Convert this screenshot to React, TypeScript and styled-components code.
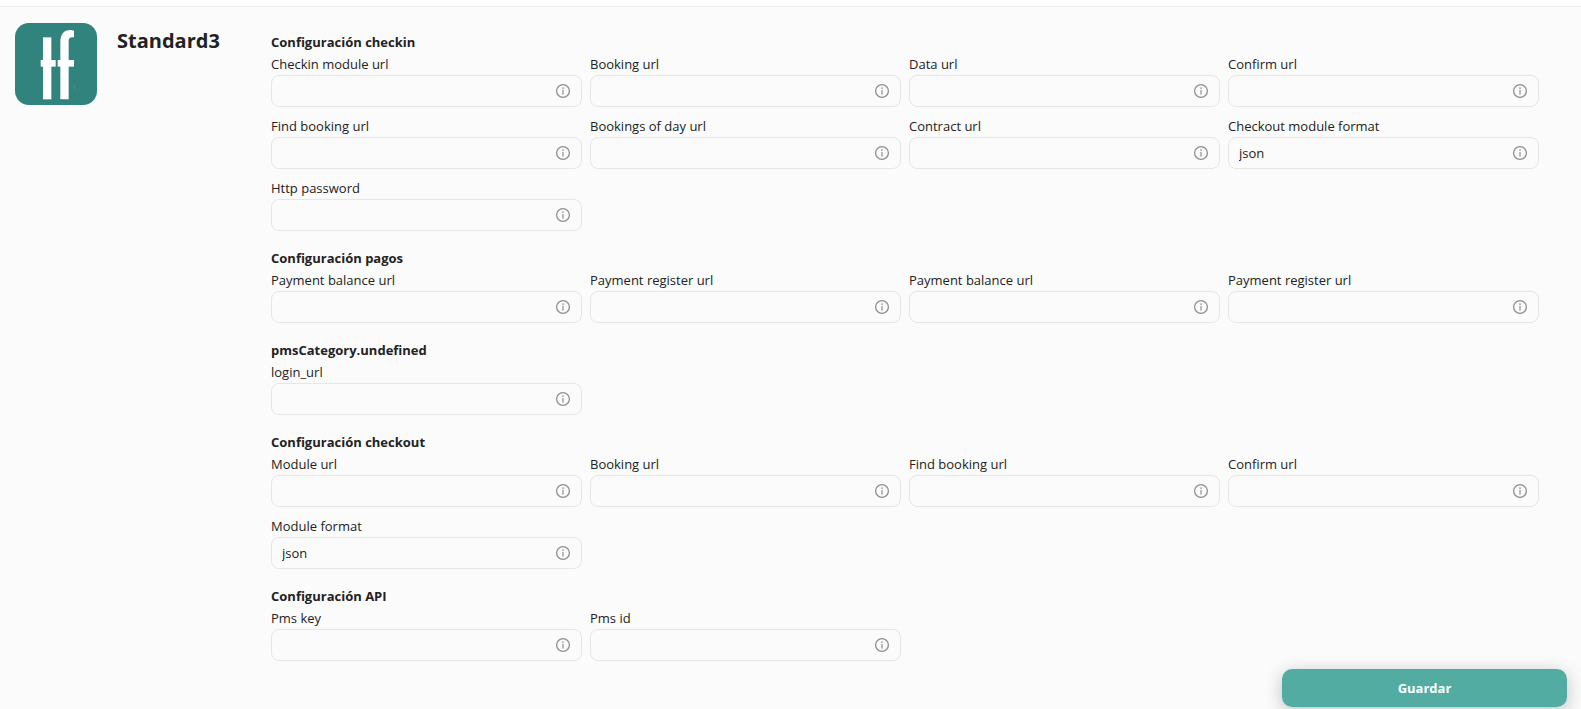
import React, { useId } from "react";
import styled, { createGlobalStyle } from "styled-components";

const GlobalStyle = createGlobalStyle`
  *, *::before, *::after { box-sizing: border-box; }
  body {
    margin: 0;
    background: #fbfbfb;
    color: #222;
    font-family: "Segoe UI", "Open Sans", "Noto Sans", sans-serif;
    font-size: 13px;
    line-height: 22px;
  }
`;

const TopStrip = styled.header`
  height: 7px;
  background: #fff;
  border-bottom: 1px solid #ededed;
`;

const Page = styled.main`
  display: flex;
  flex-direction: column;
  gap: 8px;
  padding: 16px 14px 2px 15px;
`;

const Content = styled.div`
  display: flex;
  align-items: flex-start;
`;

const Brand = styled.div`
  flex: 0 0 256px;
  display: flex;
  align-items: flex-start;
  gap: 20px;
`;

const Logo = styled.svg`
  flex: none;
  width: 82px;
  height: 82px;
  border-radius: 14px;
  background: #30847d;
`;

const Title = styled.h1`
  margin: 2px 0 0;
  font-size: 20px;
  line-height: 32px;
  font-weight: 700;
`;

const Form = styled.form`
  flex: 1;
  min-width: 0;
  display: flex;
  flex-direction: column;
  gap: 16px;
  padding: 8px 28px 0 0;
`;

const Section = styled.section``;

const SectionTitle = styled.h2`
  margin: 0;
  font-size: 13px;
  line-height: 22px;
  font-weight: 700;
`;

const FieldGrid = styled.div`
  display: grid;
  grid-template-columns: repeat(4, minmax(0, 1fr));
  gap: 8px;
`;

const FieldCell = styled.div`
  display: flex;
  flex-direction: column;
`;

const InputBox = styled.div`
  display: flex;
  align-items: center;
  gap: 4px;
  height: 32px;
  padding: 0 10px;
  border: 1px solid #e6e6e6;
  border-radius: 8px;
  color: #8f8f8f;

  &:focus-within { border-color: #53aca2; }
`;

const Input = styled.input`
  flex: 1;
  min-width: 0;
  padding: 0;
  border: 0;
  outline: 0;
  background: transparent;
  color: #222;
  font: inherit;
`;

const InfoSvg = styled.svg`
  flex: none;
  width: 16px;
  height: 16px;
`;

const SaveButton = styled.button`
  align-self: flex-end;
  width: 285px;
  height: 38px;
  border: 0;
  border-radius: 10px;
  background: #53aca2;
  box-shadow: 0 4px 18px rgba(0, 0, 0, 0.24);
  color: #fff;
  font: inherit;
  font-weight: 700;
  cursor: pointer;
`;

type FieldData = { label: string; value?: string };

const sections: { title: string; fields: FieldData[] }[] = [
  {
    title: "Configuración checkin",
    fields: [
      { label: "Checkin module url" },
      { label: "Booking url" },
      { label: "Data url" },
      { label: "Confirm url" },
      { label: "Find booking url" },
      { label: "Bookings of day url" },
      { label: "Contract url" },
      { label: "Checkout module format", value: "json" },
      { label: "Http password" },
    ],
  },
  {
    title: "Configuración pagos",
    fields: [
      { label: "Payment balance url" },
      { label: "Payment register url" },
      { label: "Payment balance url" },
      { label: "Payment register url" },
    ],
  },
  { title: "pmsCategory.undefined", fields: [{ label: "login_url" }] },
  {
    title: "Configuración checkout",
    fields: [
      { label: "Module url" },
      { label: "Booking url" },
      { label: "Find booking url" },
      { label: "Confirm url" },
      { label: "Module format", value: "json" },
    ],
  },
  {
    title: "Configuración API",
    fields: [{ label: "Pms key" }, { label: "Pms id" }],
  },
];

function InfoIcon() {
  return (
    <InfoSvg viewBox="0 0 16 16" aria-hidden>
      <circle cx="8" cy="8" r="6.4" fill="none" stroke="currentColor" strokeWidth="1.3" />
      <rect x="7.3" y="4.4" width="1.4" height="1.5" fill="currentColor" />
      <rect x="7.4" y="7" width="1.2" height="4.6" fill="currentColor" />
    </InfoSvg>
  );
}

function Field({ label, value = "" }: FieldData) {
  const id = useId();
  return (
    <FieldCell>
      <label htmlFor={id}>{label}</label>
      <InputBox>
        <Input id={id} type="text" defaultValue={value} />
        <InfoIcon />
      </InputBox>
    </FieldCell>
  );
}

export default function App() {
  return (
    <>
      <GlobalStyle />
      <TopStrip />
      <Page>
        <Content>
          <Brand>
            <Logo viewBox="0 0 246 246" aria-hidden>
              <g fill="#fff">
                <rect x="84" y="43" width="25" height="186" />
                <rect x="77" y="111" width="45" height="20" />
                <rect x="128" y="111" width="49" height="20" />
                <path d="M136 229V58C136 34 146 21 166 21Q172 21 177 23V43H171C164 43 161 47 161 54V229Z" />
              </g>
              <rect x="178" y="188" width="2" height="12" fill="#4b958f" />
            </Logo>
            <Title>Standard3</Title>
          </Brand>
          <Form id="pms-form">
            {sections.map((section) => (
              <Section key={section.title}>
                <SectionTitle>{section.title}</SectionTitle>
                <FieldGrid>
                  {section.fields.map((field, i) => (
                    <Field key={i} {...field} />
                  ))}
                </FieldGrid>
              </Section>
            ))}
          </Form>
        </Content>
        <SaveButton type="button" form="pms-form">
          Guardar
        </SaveButton>
      </Page>
    </>
  );
}
